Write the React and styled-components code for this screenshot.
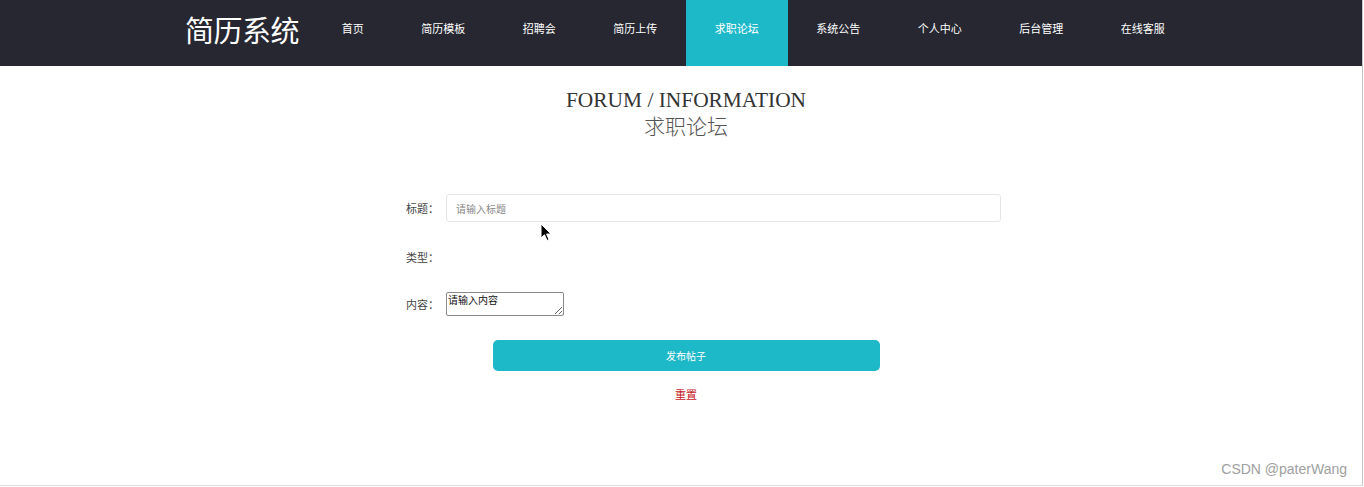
import styled, { createGlobalStyle } from 'styled-components'

const navItems = ['首页', '简历模板', '招聘会', '简历上传', '求职论坛', '系统公告', '个人中心', '后台管理', '在线客服']
const activeItem = '求职论坛'

const GlobalStyle = createGlobalStyle`
  html, body {
    margin: 0;
    padding: 0;
    background: #fff;
    font-family: "Noto Sans CJK SC", "Liberation Sans", sans-serif;
  }
`

const App = () => {
  return (
    <Page>
      <GlobalStyle />
      <Header>
        <Logo>简历系统</Logo>
        <Nav>
          {navItems.map((item) => (
            <NavItem key={item} $active={item === activeItem}>
              {item}
            </NavItem>
          ))}
        </Nav>
      </Header>
      <Main>
        <Title>
          <TitleEn>FORUM / INFORMATION</TitleEn>
          <TitleCn>求职论坛</TitleCn>
        </Title>
        <Form>
          <Row>
            <Label>标题：</Label>
            <TextInput placeholder="请输入标题" />
          </Row>
          <Row>
            <Label>类型：</Label>
          </Row>
          <Row $short>
            <Label>内容：</Label>
            <TextArea placeholder="请输入内容" />
          </Row>
          <Actions>
            <SubmitButton type="button">发布帖子</SubmitButton>
            <ResetLink>重置</ResetLink>
          </Actions>
        </Form>
        <Cursor width="12" height="19" viewBox="0 0 12 19">
          <path d="M1 1 L1 15 L4.5 11.8 L7 17.5 L9 16.6 L6.6 11 L11 11 Z" fill="#000" stroke="#fff" strokeWidth="1" />
        </Cursor>
      </Main>
      <Watermark>CSDN @paterWang</Watermark>
    </Page>
  )
}

export default App

const Page = styled.div`
  position: relative;
  width: 1362px;
  height: 485px;
  border-right: 1px solid #c8c8c8;
  border-bottom: 1px solid #dcdcdc;
  overflow: hidden;
`

const Header = styled.header`
  height: 66px;
  background: #262731;
  display: flex;
  align-items: flex-start;
  padding-left: 185px;
`

const Logo = styled.div`
  color: #fff;
  font-size: 29px;
  line-height: 58px;
  letter-spacing: -0.5px;
  margin-right: 14px;
`

const Nav = styled.nav`
  display: flex;
  height: 66px;
`

const NavItem = styled.div`
  height: 66px;
  padding: 0 28.75px;
  line-height: 57px;
  font-size: 11px;
  color: #fff;
  background: ${(p) => (p.$active ? '#1eb9c9' : 'transparent')};
  white-space: nowrap;
`

const Main = styled.main`
  position: relative;
  padding-left: 10px;
  display: flex;
  flex-direction: column;
  align-items: center;
`

const Title = styled.div`
  margin-top: 22px;
  text-align: center;
  color: #333;
`

const TitleEn = styled.div`
  font-family: "Liberation Serif", "Noto Sans CJK SC", serif;
  font-size: 21.4px;
  line-height: 24px;
`

const TitleCn = styled.div`
  font-family: "Noto Sans CJK SC", serif;
  font-size: 21px;
  font-weight: 300;
  line-height: 26px;
  color: #555;
`

const Form = styled.form`
  width: 630px;
  margin-top: 56px;
  display: flex;
  flex-direction: column;
  gap: 21px;
`

const Row = styled.div`
  display: flex;
  align-items: center;
  min-height: ${(p) => (p.$short ? '24px' : '28px')};
`

const Label = styled.label`
  width: 68px;
  padding-right: 7px;
  text-align: right;
  font-size: 11px;
  color: #444;
  flex-shrink: 0;
`

const TextInput = styled.input`
  box-sizing: border-box;
  width: 555px;
  height: 28px;
  border: 1px solid #e6e6e6;
  border-radius: 3px;
  padding: 0 9px;
  font-family: inherit;
  font-size: 10px;
  outline: none;
  &::placeholder {
    color: #888;
  }
`

const TextArea = styled.textarea`
  box-sizing: border-box;
  width: 118px;
  height: 24px;
  border: 1px solid #8a8a8a;
  border-radius: 2px;
  padding: 0 1px;
  font-family: inherit;
  font-size: 10px;
  line-height: 13px;
  &::placeholder {
    color: #111;
  }
`

const Actions = styled.div`
  display: flex;
  flex-direction: column;
  align-items: center;
  gap: 15px;
  margin-top: 3px;
`

const SubmitButton = styled.button`
  width: 387px;
  height: 31px;
  border: none;
  border-radius: 5px;
  background: #1eb9c9;
  color: #fff;
  font-family: inherit;
  font-size: 10px;
  cursor: pointer;
`

const ResetLink = styled.span`
  color: #c8161d;
  font-size: 11px;
  line-height: 16px;
`

const Cursor = styled.svg`
  position: absolute;
  left: 540px;
  top: 157px;
`

const Watermark = styled.div`
  position: absolute;
  right: 15px;
  bottom: 8px;
  font-family: "Liberation Sans", sans-serif;
  font-size: 14px;
  color: #a0a0a0;
`
